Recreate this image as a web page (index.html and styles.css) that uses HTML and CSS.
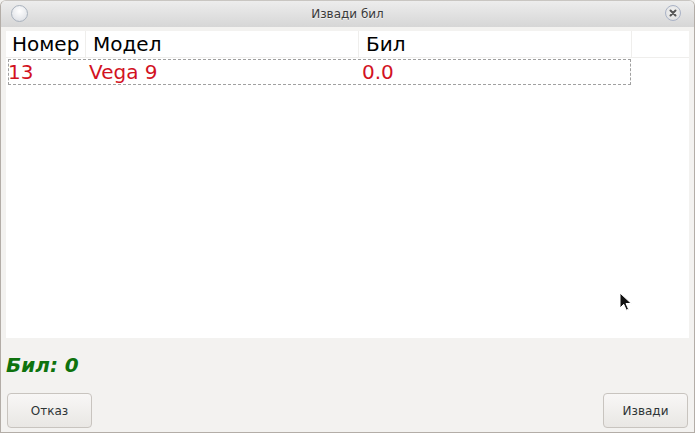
FILE: index.html
```html
<!DOCTYPE html>
<html>
<head>
<meta charset="utf-8">
<link rel="stylesheet" href="styles.css">
</head>
<body>
<div class="window">
  <div class="titlebar">
    <span class="tb-circle"></span>
    <span class="title">Извади бил</span>
    <span class="tb-close">
      <svg width="14" height="14" viewBox="0 0 14 14"><path d="M4.5 4.5 L9.5 9.5 M9.5 4.5 L4.5 9.5" stroke="#555" stroke-width="2" stroke-linecap="round"/></svg>
    </span>
  </div>
  <div class="content">
    <div class="table">
      <div class="thead">
        <div class="th c1">Номер</div>
        <div class="th c2">Модел</div>
        <div class="th c3">Бил</div>
        <div class="th c4"></div>
      </div>
      <div class="row">
        <div class="td c1">13</div>
        <div class="td c2">Vega 9</div>
        <div class="td c3">0.0</div>
      </div>
      <svg class="cursor" width="14" height="20" viewBox="0 0 14 20"><path d="M1 1 L1 16 L4.7 12.3 L7.3 18.2 L9.6 17.2 L7 11.5 L12.3 11.5 Z" fill="#111" stroke="#fff" stroke-width="1"/></svg>
    </div>
    <div class="status">Бил: 0</div>
    <div class="buttons">
      <button class="btn">Отказ</button>
      <button class="btn">Извади</button>
    </div>
  </div>
</div>
</body>
</html>
```
FILE: styles.css
```css
html, body { margin: 0; padding: 0; }
body { width: 695px; height: 433px; overflow: hidden; background: #f3f2f0; font-family: "DejaVu Sans", sans-serif; }
.window {
  box-sizing: border-box; width: 695px; height: 433px;
  border: 1px solid #b3ada7; border-top-color: #c9c6c2;
  border-radius: 6px 6px 0 0;
  background: #f3f2f0; display: flex; flex-direction: column;
  overflow: hidden;
}
.titlebar {
  height: 26px; flex: none; display: flex; align-items: center;
  background: linear-gradient(#ededed, #d6d6d6);
  position: relative;
}
.tb-circle {
  position: absolute; left: 10px; top: 4px; width: 15px; height: 15px; border-radius: 50%;
  border: 1px solid #a9b2bd; background: radial-gradient(circle at 50% 35%, #ffffff, #e4e6ea 70%, #d0d4da);
  box-sizing: content-box;
}
.title {
  flex: 1; text-align: center; font-size: 12px; color: #3a3a3a;
  text-shadow: 0 1px 0 rgba(255,255,255,0.6);
}
.tb-close {
  position: absolute; right: 13px; top: 4px; width: 14px; height: 14px; border-radius: 50%;
  border: 1px solid #a9b2c6; background: radial-gradient(circle at 50% 40%, #f4f4f4, #dcdcdc);
  display: flex; align-items: center; justify-content: center;
}
.content { flex: 1; display: flex; flex-direction: column; padding: 4px 5px 0 5px; }
.table {
  position: relative;
  background: #fff; width: 683px; height: 307px; flex: none;
}
.thead { display: flex; height: 26px; border-bottom: 1px solid #efeeec; }
.th { font-size: 20px; color: #000; line-height: 26px; padding-left: 7px; box-sizing: border-box; border-right: 1px solid #efeeec; }
.th.c1 { padding-left: 6px; }
.c1 { width: 80px; }
.c2 { width: 273px; }
.c3 { width: 273px; }
.c4 { width: 57px; border-right: none; }
.row {
  display: flex; margin: 1px 0 0 2px; width: 623px; height: 26px; box-sizing: border-box;
  border: 1px dashed #a0a0a0;
}
.td { font-size: 20px; color: #d2121f; line-height: 24px; box-sizing: border-box; white-space: nowrap; }
.row .c1 { width: 80px; text-indent: -1px; }
.row .c2 { width: 273px; }
.row .c3 { width: 268px; }
.cursor { position: absolute; left: 613px; top: 261px; }
.status {
  font-size: 20px; font-weight: bold; font-style: italic; color: #0e720e;
  padding: 15px 0 0 0; height: 39px; box-sizing: border-box; line-height: 24px;
}
.buttons { display: flex; justify-content: space-between; padding: 16px 1px 0 1px; }
.btn {
  width: 85px; height: 35px; box-sizing: border-box;
  border: 1px solid #c8c4bf; border-radius: 4px;
  background: linear-gradient(#f8f7f6, #e9e7e4);
  font-family: "DejaVu Sans", sans-serif; font-size: 12px; color: #2e3436;
  padding: 0;
}
```
